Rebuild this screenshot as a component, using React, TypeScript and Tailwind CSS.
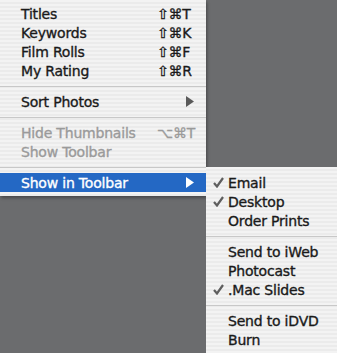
const font = "font-['DejaVu_Sans',sans-serif] [-webkit-text-stroke:0.35px_currentColor]";

type Item =
  | { kind: "item"; label: string; shortcut?: string; submenu?: boolean; disabled?: boolean; active?: boolean; checked?: boolean }
  | { kind: "sep" };

const MAIN: Item[] = [
  { kind: "item", label: "Titles", shortcut: "⇧⌘T" },
  { kind: "item", label: "Keywords", shortcut: "⇧⌘K" },
  { kind: "item", label: "Film Rolls", shortcut: "⇧⌘F" },
  { kind: "item", label: "My Rating", shortcut: "⇧⌘R" },
  { kind: "sep" },
  { kind: "item", label: "Sort Photos", submenu: true },
  { kind: "sep" },
  { kind: "item", label: "Hide Thumbnails", shortcut: "⌥⌘T", disabled: true },
  { kind: "item", label: "Show Toolbar", disabled: true },
  { kind: "sep" },
  { kind: "item", label: "Show in Toolbar", submenu: true, active: true },
];

const SUB: Item[] = [
  { kind: "item", label: "Email", checked: true },
  { kind: "item", label: "Desktop", checked: true },
  { kind: "item", label: "Order Prints" },
  { kind: "sep" },
  { kind: "item", label: "Send to iWeb" },
  { kind: "item", label: "Photocast" },
  { kind: "item", label: ".Mac Slides", checked: true },
  { kind: "sep" },
  { kind: "item", label: "Send to iDVD" },
  { kind: "item", label: "Burn" },
];

const stripes =
  "bg-[repeating-linear-gradient(to_bottom,#f3f3f3_0px,#f3f3f3_2px,#ebebeb_2px,#ebebeb_4px)]";

function Arrow({ color }: { color: string }) {
  return (
    <svg width="8" height="11" viewBox="0 0 8 11" className="shrink-0">
      <path d="M0 0 L8 5.5 L0 11 Z" fill={color} />
    </svg>
  );
}

function Check() {
  return (
    <svg width="11" height="11" viewBox="0 0 11 11" className="shrink-0">
      <path d="M1 6 L4 9.5 L10 1" fill="none" stroke="#5e5e5e" strokeWidth="2.2" />
    </svg>
  );
}

function Sep() {
  return (
    <div className="flex h-[12px] items-center">
      <div className="h-px w-full bg-[#c8c8c8]" />
    </div>
  );
}

export default function App() {
  return (
    <div className={`flex h-[353px] w-[337px] items-start overflow-hidden bg-[#6b6c6e] ${font}`}>
      <div className={`w-[206px] py-[4px] ${stripes} shadow-[1px_2px_3px_rgba(0,0,0,0.35)]`}>
        {MAIN.map((it, i) =>
          it.kind === "sep" ? (
            <Sep key={i} />
          ) : (
            <div
              key={i}
              className={`flex h-[19px] items-center pl-[21px] pr-[12px] text-[14px] leading-none tracking-[-0.2px] ${
                it.active ? "bg-[#2468c4] text-white" : it.disabled ? "text-[#9a9a9a]" : "text-[#1a1a1a]"
              }`}
            >
              <span className="flex-1">{it.label}</span>
              {it.shortcut && <span className="w-[37px] text-left">{it.shortcut}</span>}
              {it.submenu && <Arrow color={it.active ? "#ffffff" : "#5a5a5a"} />}
            </div>
          )
        )}
      </div>
      <div className={`mt-[167px] h-[186px] w-[131px] pt-[6px] ${stripes}`}>
        {SUB.map((it, i) =>
          it.kind === "sep" ? (
            <Sep key={i} />
          ) : (
            <div key={i} className="flex h-[19px] items-center text-[14px] leading-none tracking-[-0.2px] text-[#1a1a1a]">
              <span className="flex w-[22px] justify-start pl-[7px]">{it.checked && <Check />}</span>
              <span>{it.label}</span>
            </div>
          )
        )}
      </div>
    </div>
  );
}
